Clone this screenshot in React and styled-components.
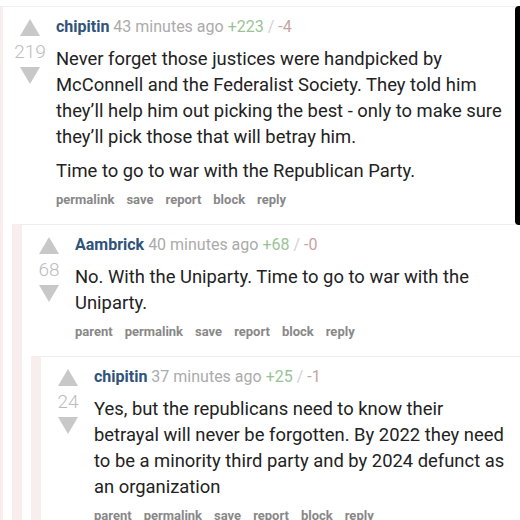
import React from "react";
import styled, { createGlobalStyle } from "styled-components";

const comment = {
  author: "chipitin",
  time: "43 minutes ago",
  up: 223,
  down: 4,
  score: 219,
  paragraphs: [
    "Never forget those justices were handpicked by McConnell and the Federalist Society. They told him they\u2019ll help him out picking the best - only to make sure they\u2019ll pick those that will betray him.",
    "Time to go to war with the Republican Party.",
  ],
  reply: {
    author: "Aambrick",
    time: "40 minutes ago",
    up: 68,
    down: 0,
    score: 68,
    parent: true,
    paragraphs: ["No. With the Uniparty. Time to go to war with the Uniparty."],
    reply: {
      author: "chipitin",
      time: "37 minutes ago",
      up: 25,
      down: 1,
      score: 24,
      parent: true,
      paragraphs: [
        "Yes, but the republicans need to know their betrayal will never be forgotten. By 2022 they need to be a minority third party and by 2024 defunct as an organization",
      ],
    },
  },
};

function Comment({ data, top }) {
  const links = ["permalink", "save", "report", "block", "reply"];
  if (data.parent) links.unshift("parent");
  return (
    <Box $top={top}>
      <Row>
        <VoteCol>
          <Arrow />
          <Score>{data.score}</Score>
          <Arrow $down />
        </VoteCol>
        <Main>
          <Header>
            <Author>{data.author}</Author> <Time>{data.time}</Time>{" "}
            <Up>+{data.up}</Up> <Slash>/</Slash> <Down>-{data.down}</Down>
          </Header>
          <Body>
            {data.paragraphs.map((p, i) => (
              <P key={i}>{p}</P>
            ))}
          </Body>
          <Links>
            {links.map((l) => (
              <LinkItem key={l}>{l}</LinkItem>
            ))}
          </Links>
        </Main>
      </Row>
      {data.reply && <Comment data={data.reply} />}
    </Box>
  );
}

export default function App() {
  return (
    <>
      <GlobalStyle />
      <Page>
        <Comment data={comment} top />
        <Scrollbar />
      </Page>
    </>
  );
}

const GlobalStyle = createGlobalStyle`
  body {
    margin: 0;
    background: #fff;
    font-family: Roboto, "Noto Sans", sans-serif;
    overflow: hidden;
  }
`;

const Page = styled.div`
  position: relative;
  padding-top: 6px;
  height: 514px;
  overflow: hidden;
`;

const Scrollbar = styled.div`
  position: absolute;
  right: 0;
  top: 6px;
  width: 5px;
  height: 219px;
  background: #000;
  border-radius: 4px 0 0 4px;
`;

const Box = styled.div`
  border-top: 1px solid #eeeeee;
  border-left: 10px solid #f8eeee;
  margin-left: ${({ $top }) => ($top ? "-7px" : "9px")};
  background: #fff;
`;

const Row = styled.div`
  display: flex;
`;

const VoteCol = styled.div`
  box-sizing: border-box;
  width: 52px;
  flex-shrink: 0;
  padding: 12px 2px 0 4px;
  display: flex;
  flex-direction: column;
  align-items: center;
`;

const Arrow = styled.div`
  width: 0;
  height: 0;
  border-left: 10px solid transparent;
  border-right: 10px solid transparent;
  ${({ $down }) =>
    $down
      ? "border-top: 17px solid #c8c8c8; margin-top: 3px;"
      : "border-bottom: 17px solid #c8c8c8;"}
`;

const Score = styled.div`
  margin-top: 4px;
  font-size: 19px;
  font-weight: 300;
  line-height: 24px;
  color: #bcbcbc;
`;

const Main = styled.div`
  flex: 1;
  min-width: 0;
  padding: 10px 9px 0 1px;
`;

const Header = styled.div`
  font-size: 16px;
  line-height: 20px;
  color: #aaa;
`;

const Author = styled.span`
  font-weight: 700;
  color: #2f5379;
`;

const Time = styled.span`
  color: #ababab;
`;

const Up = styled.span`
  color: #97c497;
`;

const Slash = styled.span`
  color: #d2d2d2;
`;

const Down = styled.span`
  color: #c8a3a3;
`;

const Body = styled.div`
  margin-top: 9px;
  font-size: 18.4px;
  line-height: 26px;
  color: #222;
`;

const P = styled.p`
  margin: 0;
  & + & {
    margin-top: 8px;
  }
`;

const Links = styled.div`
  display: flex;
  gap: 12px;
  margin: 7px 0 15px;
  font-size: 13px;
  font-weight: 700;
  line-height: 18px;
  color: #888;
`;

const LinkItem = styled.span``;
